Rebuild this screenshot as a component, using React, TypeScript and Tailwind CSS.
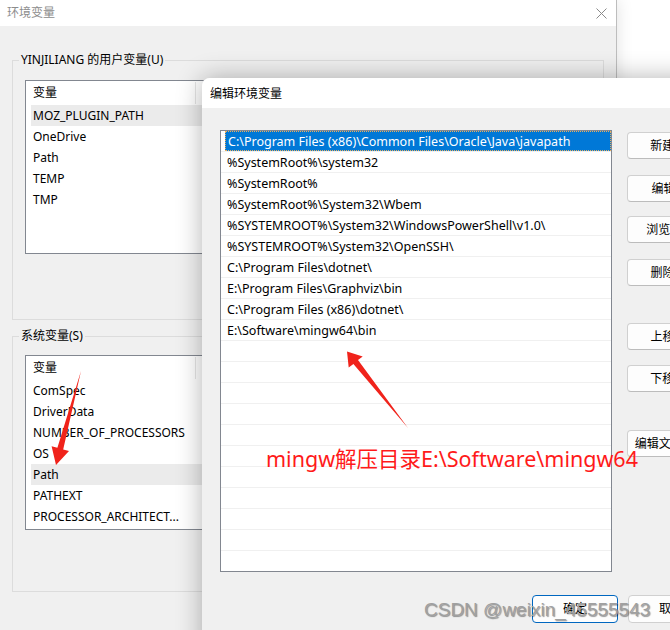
import React from "react";

const font = "font-['Noto_Sans','Noto_Sans_CJK_SC',sans-serif]";

function VarList({ title, items, selected, heightClass, mtClass }: { title: string; items: string[]; selected: number; heightClass: string; mtClass: string }) {
  return (
    <div className={`${mtClass} ${heightClass} mx-[12px] border border-[#828790] bg-white flex flex-col overflow-hidden`}>
      <div className="h-[24px] flex shrink-0">
        <div className="w-[170px] pl-[7px] flex items-center border-r border-[#e5e5e5] my-[1px]">{title}</div>
      </div>
      {items.map((it, i) => (
        <div key={i} className={`h-[21px] shrink-0 mx-[5px] pl-[2px] flex items-center ${i === selected ? "bg-[#ebebeb]" : ""}`}>
          {it}
        </div>
      ))}
    </div>
  );
}

export default function App() {
  const userVars = ["MOZ_PLUGIN_PATH", "OneDrive", "Path", "TEMP", "TMP"];
  const sysVars = ["ComSpec", "DriverData", "NUMBER_OF_PROCESSORS", "OS", "Path", "PATHEXT", "PROCESSOR_ARCHITECT..."];
  const paths = [
    "C:\\Program Files (x86)\\Common Files\\Oracle\\Java\\javapath",
    "%SystemRoot%\\system32",
    "%SystemRoot%",
    "%SystemRoot%\\System32\\Wbem",
    "%SYSTEMROOT%\\System32\\WindowsPowerShell\\v1.0\\",
    "%SYSTEMROOT%\\System32\\OpenSSH\\",
    "C:\\Program Files\\dotnet\\",
    "E:\\Program Files\\Graphviz\\bin",
    "C:\\Program Files (x86)\\dotnet\\",
    "E:\\Software\\mingw64\\bin",
  ];
  const rows = Array.from({ length: 22 }, (_, i) => paths[i] ?? "");
  const buttons: [string, string][] = [
    ["新建(N)", "mt-[2px]"],
    ["编辑(E)", "mt-[16px]"],
    ["浏览(B)...", "mt-[14px]"],
    ["删除(D)", "mt-[16px]"],
    ["上移(U)", "mt-[37px]"],
    ["下移(O)", "mt-[15px]"],
    ["编辑文本(T)...", "mt-[38px]"],
  ];

  return (
    <div className={`relative w-[670px] h-[630px] overflow-hidden bg-white text-[12px] text-black ${font}`}>
      {/* Background window */}
      <div className="absolute left-0 top-0 w-[617px] h-[660px] bg-[#f0f0f0] border-r border-[#bdbdbd] flex flex-col shadow-[0_0_16px_rgba(0,0,0,0.12)]">
        <div className="h-[26px] bg-white flex items-center justify-between pl-[7px] pr-[9px] shrink-0">
          <span className="text-[#8c8c8c]">环境变量</span>
          <svg width="11" height="11" viewBox="0 0 11 11">
            <path d="M0.5 0.5 L10.5 10.5 M10.5 0.5 L0.5 10.5" stroke="#8a8a8a" strokeWidth="1" />
          </svg>
        </div>
        <div className="px-[12px] pt-[26px] flex flex-col">
          <fieldset className="border border-[#dcdcdc] pb-[65px] flex flex-col">
            <legend className="ml-[6px] px-[2px] leading-[16px]">YINJILIANG 的用户变量(U)</legend>
            <VarList title="变量" items={userVars} selected={0} heightClass="h-[174px]" mtClass="mt-[12px]" />
          </fieldset>
          <fieldset className="mt-[8px] border border-[#dcdcdc] pb-[61px] flex flex-col">
            <legend className="ml-[6px] px-[2px] leading-[16px]">系统变量(S)</legend>
            <VarList title="变量" items={sysVars} selected={4} heightClass="h-[175px]" mtClass="mt-[11px]" />
          </fieldset>
        </div>
      </div>

      {/* Front dialog */}
      <div className="absolute left-[202px] top-[78px] w-[530px] h-[580px] bg-[#f0f0f0] rounded-tl-[8px] overflow-hidden shadow-[0_0_26px_rgba(0,0,0,0.3)] flex flex-col">
        <div className="h-[30px] bg-white flex items-center pl-[8px] pt-[1px] shrink-0">编辑环境变量</div>
        <div className="flex pt-[22px] pl-[18px]">
          <div className="w-[392px] h-[442px] border border-[#828790] bg-white flex flex-col overflow-hidden text-[12.5px]">
            {rows.map((p, i) => (
              <div key={i} className="h-[21px] shrink-0 border-b border-[#f0f0f0] flex">
                <div className={`flex-1 ml-[4px] pl-[2px] pt-[2px] flex items-center whitespace-nowrap ${i === 0 ? "bg-[#0078d7] text-white border border-dotted border-[#e8b060]" : ""}`}>
                  {p}
                </div>
              </div>
            ))}
          </div>
          <div className="ml-[15px] w-[87px] flex flex-col">
            {buttons.map(([t, m]) => (
              <div key={t} className={`${m} h-[27px] bg-[#fdfdfd] border border-[#d0d0d0] border-b-[#bcbcbc] rounded-[4px] flex items-center justify-center whitespace-nowrap`}>
                {t}
              </div>
            ))}
          </div>
        </div>
        <div className="flex pl-[330px] gap-[10px] mt-[23px]">
          <div className="w-[86px] h-[28px] bg-[#fdfdfd] border border-[#0067c0] rounded-[4px] flex items-center justify-center">确定</div>
          <div className="w-[86px] h-[28px] bg-[#fdfdfd] border border-[#d0d0d0] rounded-[4px] flex items-center justify-center">取消</div>
        </div>
      </div>

      {/* Annotations */}
      <svg className="absolute left-0 top-0 pointer-events-none" width="670" height="630" viewBox="0 0 670 630">
        <polygon points="408,428 358,360.1 362.7,356.4 347,351.5 348.7,367.6 353.4,363.9" fill="#f0231b" />
        <polygon points="81,371 63.2,449.4 69,450.9 56,465 51.6,446.3 57.4,447.8" fill="#f0231b" />
      </svg>
      <div className="absolute left-[266px] top-[444px] text-[21.5px] leading-[30px] text-[#ff1a1a] whitespace-nowrap">mingw解压目录E:\Software\mingw64</div>
      <div className="absolute left-[424px] top-[598px] font-['Liberation_Sans',sans-serif] text-[19px] leading-[24px] text-[#a0a0a0] [text-shadow:1px_1px_1px_rgba(0,0,0,0.4)] whitespace-nowrap">CSDN @weixin_45555543</div>
    </div>
  );
}
